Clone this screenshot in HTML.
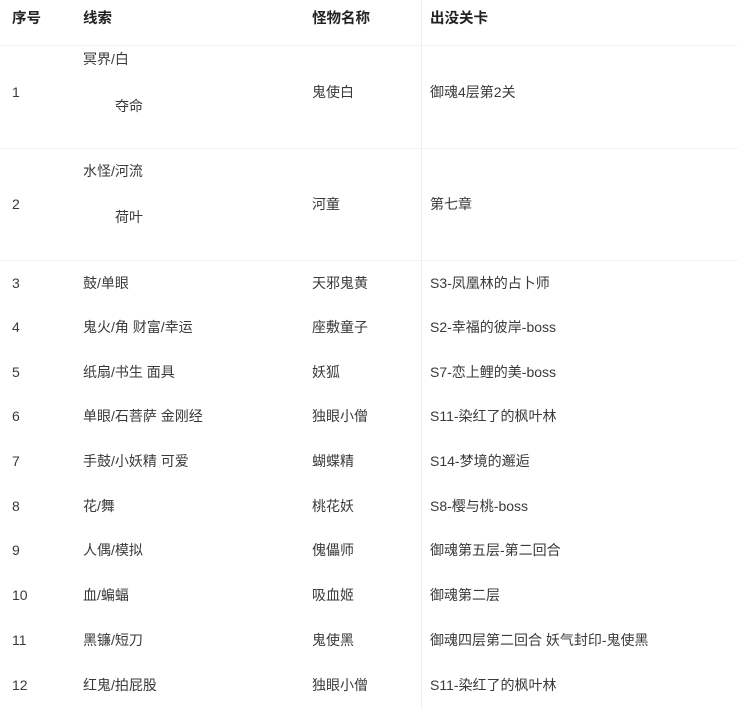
<!DOCTYPE html>
<html><head><meta charset="utf-8"><style>
body{margin:0;width:738px;height:710px;background:#fff;position:relative;overflow:hidden;font-family:"Liberation Sans","Noto Sans CJK SC",sans-serif;font-size:14px;color:#3a3a3a}
span{position:absolute;white-space:nowrap;line-height:18px;transform:translateY(-9px)}
.h{font-weight:bold;color:#222;font-size:14.5px}
.vl{position:absolute;left:421px;top:0;width:1px;height:710px;background:#eee}
.hl{position:absolute;left:0;width:738px;height:1px;background:#f3f3f3}
.a{left:12px}.b{left:83px}.c{left:312px}.d{left:430px}
</style></head><body>
<div class="vl"></div>
<div class="hl" style="top:45px"></div>
<div class="hl" style="top:148px"></div>
<div class="hl" style="top:260px"></div>
<span class="h a" style="top:19px">序号</span>
<span class="h b" style="top:19px">线索</span>
<span class="h c" style="top:19px">怪物名称</span>
<span class="h d" style="top:19px">出没关卡</span>

<span class="a" style="top:92px">1</span>
<span class="b" style="top:59px">冥界/白</span>
<span style="left:115px;top:106px">夺命</span>
<span class="c" style="top:92px">鬼使白</span>
<span class="d" style="top:92px">御魂4层第2关</span>

<span class="a" style="top:204px">2</span>
<span class="b" style="top:171px">水怪/河流</span>
<span style="left:115px;top:217px">荷叶</span>
<span class="c" style="top:204px">河童</span>
<span class="d" style="top:204px">第七章</span>

<span class="a" style="top:283px">3</span><span class="b" style="top:283px">鼓/单眼</span><span class="c" style="top:283px">天邪鬼黄</span><span class="d" style="top:283px">S3-凤凰林的占卜师</span>
<span class="a" style="top:327px">4</span><span class="b" style="top:327px">鬼火/角 财富/幸运</span><span class="c" style="top:327px">座敷童子</span><span class="d" style="top:327px">S2-幸福的彼岸-boss</span>
<span class="a" style="top:372px">5</span><span class="b" style="top:372px">纸扇/书生 面具</span><span class="c" style="top:372px">妖狐</span><span class="d" style="top:372px">S7-恋上鲤的美-boss</span>
<span class="a" style="top:416px">6</span><span class="b" style="top:416px">单眼/石菩萨 金刚经</span><span class="c" style="top:416px">独眼小僧</span><span class="d" style="top:416px">S11-染红了的枫叶林</span>
<span class="a" style="top:461px">7</span><span class="b" style="top:461px">手鼓/小妖精 可爱</span><span class="c" style="top:461px">蝴蝶精</span><span class="d" style="top:461px">S14-梦境的邂逅</span>
<span class="a" style="top:506px">8</span><span class="b" style="top:506px">花/舞</span><span class="c" style="top:506px">桃花妖</span><span class="d" style="top:506px">S8-樱与桃-boss</span>
<span class="a" style="top:550px">9</span><span class="b" style="top:550px">人偶/模拟</span><span class="c" style="top:550px">傀儡师</span><span class="d" style="top:550px">御魂第五层-第二回合</span>
<span class="a" style="top:595px">10</span><span class="b" style="top:595px">血/蝙蝠</span><span class="c" style="top:595px">吸血姬</span><span class="d" style="top:595px">御魂第二层</span>
<span class="a" style="top:640px">11</span><span class="b" style="top:640px">黑镰/短刀</span><span class="c" style="top:640px">鬼使黑</span><span class="d" style="top:640px">御魂四层第二回合 妖气封印-鬼使黑</span>
<span class="a" style="top:685px">12</span><span class="b" style="top:685px">红鬼/拍屁股</span><span class="c" style="top:685px">独眼小僧</span><span class="d" style="top:685px">S11-染红了的枫叶林</span>
</body></html>
